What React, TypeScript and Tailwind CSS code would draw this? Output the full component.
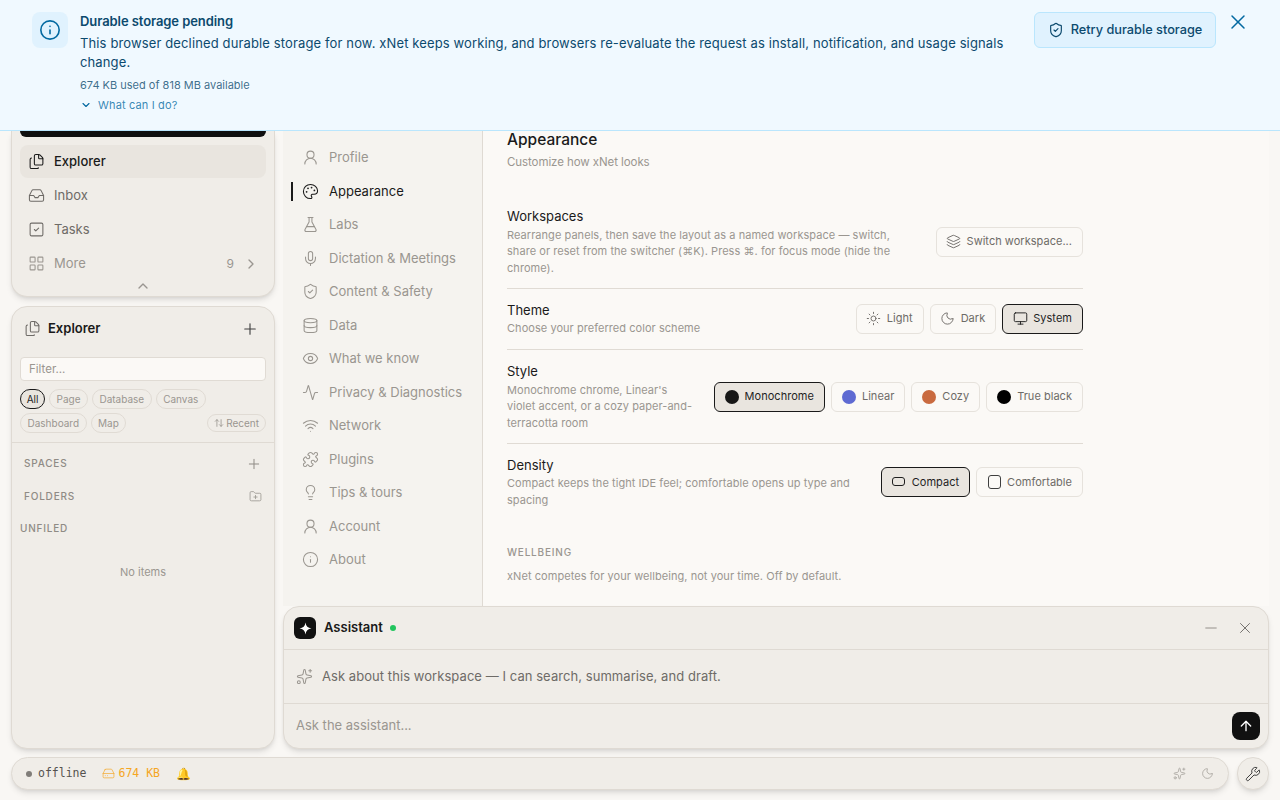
import React from 'react';
import {
  Activity, ArrowUp, ArrowUpDown, ChevronDown, ChevronRight, ChevronUp, Database, Eye, Files, FlaskConical,
  FolderPlus, HardDrive, Inbox, Info, Layers, LayoutGrid, Lightbulb, Mic, Minus, Monitor, Moon, Palette, Plus,
  Puzzle, ShieldCheck, Sparkles, SquareCheck, Sun, UserRound, Wifi, Wrench, X,
} from 'lucide-react';

const settingsNav = [
  { label: 'Profile', icon: UserRound },
  { label: 'Appearance', icon: Palette, active: true },
  { label: 'Labs', icon: FlaskConical },
  { label: 'Dictation & Meetings', icon: Mic },
  { label: 'Content & Safety', icon: ShieldCheck },
  { label: 'Data', icon: Database },
  { label: 'What we know', icon: Eye },
  { label: 'Privacy & Diagnostics', icon: Activity },
  { label: 'Network', icon: Wifi },
  { label: 'Plugins', icon: Puzzle },
  { label: 'Tips & tours', icon: Lightbulb },
  { label: 'Account', icon: UserRound },
  { label: 'About', icon: Info },
];

const Option: React.FC<{ active?: boolean; icon?: React.ReactNode; label: string }> = ({ active, icon, label }) => (
  <div
    className={`flex h-[30px] items-center gap-[6px] rounded-[6px] border px-[10px] text-[11px] tracking-[0.03px] ${
      active ? 'border-[#1a1a1a] bg-[#e9e5df] text-[#1f1f1f]' : 'border-[#e6e2dc] text-[#6e6b67]'
    }`}
  >
    {icon}
    <span>{label}</span>
  </div>
);

const Dot: React.FC<{ color: string }> = ({ color }) => (
  <span className={`h-[14px] w-[14px] rounded-full ${color}`} />
);

const Chip: React.FC<{ label: string; active?: boolean }> = ({ label, active }) => (
  <span
    className={`flex h-[20px] items-center justify-center rounded-full border text-[10px] ${
      active ? 'w-[25px] border-[#1a1a1a] bg-[#e9e5df] text-[#1f1f1f]' : 'border-[#e0dbd4] px-[6.5px] text-[#9a9690]'
    }`}
  >
    {label}
  </span>
);

const rowTitle = 'text-[13px] leading-[18px] text-[#1a1a1a]';
const rowDesc = 'mt-[1.5px] text-[11px] leading-[16.5px] tracking-[0.05px] text-[#9a9690]';
const optionIcon = '-mx-[0.5px]';

export default function App() {
  return (
    <div className="flex h-screen flex-col overflow-hidden bg-[#f9f7f4] font-['Inter',sans-serif]">
      {/* storage banner */}
      <div className="flex h-[131px] shrink-0 items-start border-b border-[#bae6fd] bg-[#f0f9ff] pl-[32px] pr-[30px] pt-[12px]">
        <div className="flex h-[36px] w-[36px] shrink-0 items-center justify-center rounded-[8px] bg-[#e0f2fe]">
          <Info size={22} strokeWidth={1.75} className="text-[#0369a1]" />
        </div>
        <div className="ml-[12px] w-[962px]">
          <div className="text-[13px] font-semibold leading-[18px] tracking-[-0.08px] text-[#0c4a6e]">Durable storage pending</div>
          <p className="mt-[4px] text-[13px] leading-[19px] tracking-[0.13px] text-[#0c4a6e]">
            This browser declined durable storage for now. xNet keeps working, and browsers re-evaluate the request as install, notification, and usage signals change.
          </p>
          <div className="mt-[5px] text-[11px] leading-[16px] text-[#0c4a6e]/80">674 KB used of 818 MB available</div>
          <div className="mt-[4px] flex items-center gap-[6px] text-[11px] leading-[16px] tracking-[0.15px] text-[#0369a1]/80">
            <ChevronDown size={12} strokeWidth={2.25} className="text-[#0369a1]" />
            What can I do?
          </div>
        </div>
        <div className="ml-[-8px] flex h-[36px] w-[182px] shrink-0 items-center justify-center gap-[7px] rounded-[6px] border border-[#bae6fd] bg-[#e0f2fe] text-[12.75px] font-medium text-[#0c4a6e]">
          <ShieldCheck size={16} strokeWidth={1.75} />
          Retry durable storage
        </div>
        <X size={24} strokeWidth={1.5} className="ml-[10px] mt-[-2px] text-[#0369a1]" />
      </div>

      <div className="flex min-h-0 flex-1 gap-[8px] px-[11px]">
        {/* left column */}
        <div className="flex w-[264px] shrink-0 flex-col gap-[9px]">
          <div className="h-[166px] rounded-b-[16px] border-x border-b border-[#dfdad3] bg-[#f0ede8] px-[8px] shadow-md">
            <div className="h-[6px] rounded-b-[8px] bg-[#0f0f0f]" />
            <div className="mt-[8px] flex h-[33px] items-center gap-[9px] rounded-[8px] bg-[#e9e5df] pl-[8px] text-[13px] font-medium text-[#1a1a1a]">
              <Files size={17} strokeWidth={1.5} />
              Explorer
            </div>
            <div className="mt-[1px] flex h-[33px] items-center gap-[9px] pl-[8px] text-[13px] text-[#6e6b67]">
              <Inbox size={17} strokeWidth={1.5} />
              Inbox
            </div>
            <div className="mt-[1px] flex h-[33px] items-center gap-[9px] pl-[8px] text-[13px] text-[#6e6b67]">
              <SquareCheck size={17} strokeWidth={1.5} />
              Tasks
            </div>
            <div className="mt-[1px] flex h-[33px] items-center gap-[9px] pl-[8px] text-[13px] text-[#9a9690]">
              <LayoutGrid size={17} strokeWidth={1.5} />
              <span className="flex-1">More</span>
              <span className="text-[12px]">9</span>
              <ChevronRight size={16} className="mr-[7px]" />
            </div>
            <ChevronUp size={16} className="mx-auto mt-[-2px] text-[#9a9690]" />
          </div>

          <div className="flex min-h-0 flex-1 flex-col rounded-[16px] border border-[#dfdad3] bg-[#f0ede8] shadow-md">
            <div className="flex h-[42px] shrink-0 items-center px-[12px] pt-[1px]">
              <Files size={17} strokeWidth={1.5} className="text-[#6e6b67]" />
              <span className="ml-[7px] flex-1 text-[13px] font-semibold text-[#1a1a1a]">Explorer</span>
              <Plus size={18} strokeWidth={1.5} className="mr-[3px] text-[#3f3f3f]" />
            </div>
            <div className="mx-[8px] mt-[8px] flex h-[24px] items-center rounded-[4px] border border-[#e0dbd4] bg-[#fbf9f6] px-[8px] pt-[1px] text-[11.5px] text-[#9a9690]">
              Filter...
            </div>
            <div className="mx-[8px] mt-[8px] flex gap-[4px]">
              <Chip label="All" active />
              <Chip label="Page" />
              <Chip label="Database" />
              <Chip label="Canvas" />
            </div>
            <div className="mx-[8px] mt-[4px] flex gap-[4px]">
              <Chip label="Dashboard" />
              <Chip label="Map" />
              <span className="ml-auto flex h-[18px] items-center gap-[2px] self-center rounded-full border border-[#e0dbd4] px-[6px] text-[10px] text-[#9a9690]">
                <ArrowUpDown size={10} />
                Recent
              </span>
            </div>
            <div className="mt-[9px] border-t border-[#dfdad3]" />
            <div className="mt-[13px] flex items-center justify-between pl-[12px] pr-[12px] text-[10px] font-medium tracking-[0.08em] text-[#8f8b85]">
              SPACES
              <Plus size={16} strokeWidth={1.5} className="my-[-1px]" />
            </div>
            <div className="mt-[18px] flex items-center justify-between pl-[12px] pr-[12px] text-[10px] font-medium tracking-[0.08em] text-[#8f8b85]">
              FOLDERS
              <FolderPlus size={13} strokeWidth={1.5} className="text-[#9a9690]" />
            </div>
            <div className="mt-[17px] pl-[8px] text-[10px] font-medium tracking-[0.08em] text-[#8f8b85]">UNFILED</div>
            <div className="mt-[28px] text-center text-[11px] text-[#9a9690]">No items</div>
          </div>
        </div>

        {/* right column */}
        <div className="flex min-w-0 flex-1 flex-col">
          <div className="flex min-h-0 flex-1">
            <div className="w-[200px] shrink-0 border-r border-[#dfdad3] bg-[#f5f3ef] pt-[10px]">
              {settingsNav.map((item) => (
                <div
                  key={item.label}
                  className={`relative flex h-[33.5px] items-center gap-[10px] pl-[19px] text-[13px] ${
                    item.active ? 'text-[#1a1a1a]' : 'text-[#9a9690]'
                  }`}
                >
                  {item.active && <span className="absolute left-[8px] top-[7px] h-[19px] w-[2px] bg-[#1a1a1a]" />}
                  <item.icon size={17} strokeWidth={1.5} />
                  {item.label}
                </div>
              ))}
            </div>
            <div className="min-w-0 flex-1 bg-[#fbf9f6] pl-[24px]">
              <div className="w-[576px]">
                <h1 className="mt-[-1px] text-[15.5px] font-medium leading-[20px] text-[#1a1a1a]">Appearance</h1>
                <p className="mt-[4px] text-[11.5px] leading-[16px] tracking-[-0.08px] text-[#9a9690]">Customize how xNet looks</p>

                <div className="mt-[37px] flex items-center justify-between border-b border-[#e0dbd4] pb-[11.5px]">
                  <div className="w-[400px]">
                    <div className={rowTitle}>Workspaces</div>
                    <p className={rowDesc}>
                      Rearrange panels, then save the layout as a named workspace — switch, share or reset from the switcher (⌘K). Press ⌘. for focus mode (hide the chrome).
                    </p>
                  </div>
                  <Option icon={<Layers size={15} strokeWidth={1.5} className={optionIcon} />} label="Switch workspace..." />
                </div>

                <div className="flex items-center justify-between border-b border-[#e0dbd4] pb-[12.5px] pt-[12px]">
                  <div>
                    <div className={rowTitle}>Theme</div>
                    <p className={rowDesc}>Choose your preferred color scheme</p>
                  </div>
                  <div className="flex gap-[6px]">
                    <Option icon={<Sun size={15} strokeWidth={1.5} className={optionIcon} />} label="Light" />
                    <Option icon={<Moon size={15} strokeWidth={1.5} className={optionIcon} />} label="Dark" />
                    <Option active icon={<Monitor size={15} strokeWidth={1.5} className={optionIcon} />} label="System" />
                  </div>
                </div>

                <div className="flex items-center justify-between border-b border-[#e0dbd4] pb-[11.5px] pt-[12px]">
                  <div className="w-[190px]">
                    <div className={rowTitle}>Style</div>
                    <p className={rowDesc}>
                      Monochrome chrome, Linear's violet accent, or a cozy paper-and-terracotta room
                    </p>
                  </div>
                  <div className="flex gap-[6px]">
                    <Option active icon={<Dot color="bg-[#171717]" />} label="Monochrome" />
                    <Option icon={<Dot color="bg-[#5e6ad2]" />} label="Linear" />
                    <Option icon={<Dot color="bg-[#c96a3f]" />} label="Cozy" />
                    <Option icon={<Dot color="bg-black" />} label="True black" />
                  </div>
                </div>

                <div className="flex items-center justify-between pb-[11.5px] pt-[12px]">
                  <div className="w-[360px]">
                    <div className={rowTitle}>Density</div>
                    <p className={rowDesc}>
                      Compact keeps the tight IDE feel; comfortable opens up type and spacing
                    </p>
                  </div>
                  <div className="flex gap-[6px]">
                    <Option active icon={<span className="mx-[0.5px] h-[9px] w-[13px] rounded-[3px] border border-[#1f1f1f]" />} label="Compact" />
                    <Option icon={<span className="mx-[0.5px] h-[14px] w-[13px] rounded-[3px] border border-[#3f3f3f]" />} label="Comfortable" />
                  </div>
                </div>

                <div className="mt-[25px] text-[10px] font-medium tracking-[0.08em] text-[#9a9690]">WELLBEING</div>
                <p className="mt-[8px] text-[11px] leading-[16px] tracking-[0.06px] text-[#9a9690]">xNet competes for your wellbeing, not your time. Off by default.</p>
              </div>
            </div>
          </div>

          {/* assistant */}
          <div className="h-[143px] shrink-0 rounded-[16px] border border-[#dfdad3] bg-[#f0ede8] shadow-md">
            <div className="flex h-[43px] items-center border-b border-[#dfdad3] pl-[10px] pr-[14px]">
              <div className="flex h-[22px] w-[22px] items-center justify-center rounded-[6px] bg-[#111]">
                <svg width="13" height="13" viewBox="0 0 12 12" fill="white">
                  <path d="M6 0.5 C6.4 3.8 8.2 5.6 11.5 6 C8.2 6.4 6.4 8.2 6 11.5 C5.6 8.2 3.8 6.4 0.5 6 C3.8 5.6 5.6 3.8 6 0.5Z" />
                </svg>
              </div>
              <span className="ml-[8px] text-[13px] font-semibold text-[#1a1a1a]">Assistant</span>
              <span className="ml-[7px] h-[6px] w-[6px] rounded-full bg-[#22c55e]" />
              <Minus size={18} strokeWidth={1.25} className="ml-auto text-[#8f8b85]" />
              <X size={18} strokeWidth={1.25} className="ml-[16px] text-[#6e6b67]" />
            </div>
            <div className="flex h-[54px] items-center gap-[9px] border-b border-[#dfdad3] pl-[12px] text-[13px] tracking-[0.06px] text-[#6e6b67]">
              <Sparkles size={17} strokeWidth={1.5} className="text-[#9a9690]" />
              Ask about this workspace — I can search, summarise, and draft.
            </div>
            <div className="flex h-[44px] items-center justify-between pl-[12px] pr-[8px] text-[13px] text-[#9a9690]">
              Ask the assistant...
              <div className="flex h-[28px] w-[28px] items-center justify-center rounded-[8px] bg-[#111]">
                <ArrowUp size={16} className="text-white" />
              </div>
            </div>
          </div>
        </div>
      </div>

      {/* status bar */}
      <div className="flex shrink-0 gap-[8px] px-[11px] pb-[10px] pt-[8px]">
        <div className="flex h-[33px] flex-1 items-center rounded-full border border-[#dfdad3] bg-[#f0ede8] pl-[14px] pr-[14px] font-['DejaVu_Sans_Mono',monospace] text-[11.5px] shadow-md">
          <span className="h-[6px] w-[6px] rounded-full bg-[#807d79]" />
          <span className="ml-[6px] text-[#55524f]">offline</span>
          <HardDrive size={13} strokeWidth={1.25} className="ml-[16px] text-[#f5a623]" />
          <span className="ml-[3px] text-[#f5a623]">674 KB</span>
          <span className="ml-[16px] text-[12px]">🔔</span>
          <Sparkles size={13} strokeWidth={1.5} className="ml-auto text-[#a8a49e]" />
          <Moon size={13} strokeWidth={1.5} className="ml-[15px] text-[#a8a49e]" />
        </div>
        <div className="flex h-[33px] w-[32px] items-center justify-center rounded-full border border-[#dfdad3] bg-[#f0ede8] text-[#3f3f3f] shadow-md">
          <Wrench size={16} strokeWidth={1.5} />
        </div>
      </div>
    </div>
  );
}
